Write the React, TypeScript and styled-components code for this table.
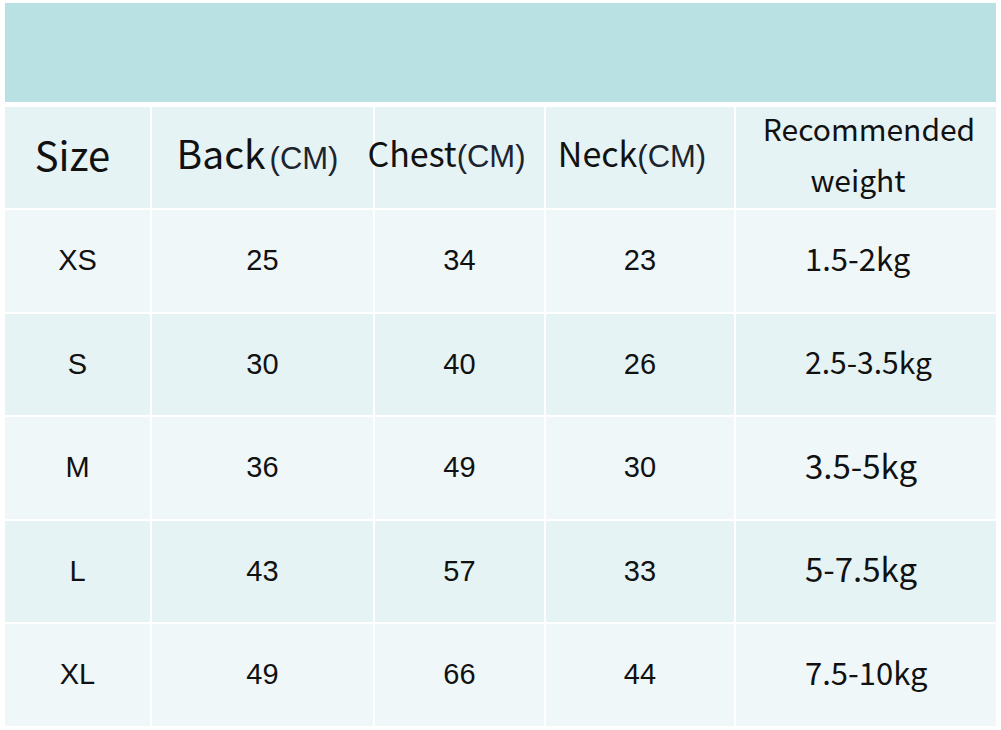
import React from "react";
import styled, { createGlobalStyle } from "styled-components";

const GlobalStyle = createGlobalStyle`
  html, body {
    margin: 0;
    padding: 0;
    background: #ffffff;
  }
`;

const Page = styled.div`
  width: 1001px;
  height: 730px;
  padding: 3px 0 0 5px;
  box-sizing: border-box;
  background: #ffffff;
`;

const Banner = styled.div`
  width: 991px;
  height: 99px;
  background: #b9e0e2;
  margin-bottom: 5px;
`;

const Table = styled.div`
  width: 991px;
  display: grid;
  grid-template-columns: 145px 221px 169px 188px 260px;
  grid-template-rows: 101px repeat(5, 101.5px);
  gap: 2px;
`;

const Cell = styled.div<{ $tone: "head" | "light" | "mid"; $align?: "left" }>`
  background: ${(p) => (p.$tone === "light" ? "#f0f7f9" : "#e6f3f4")};
  display: flex;
  align-items: center;
  justify-content: ${(p) => (p.$align === "left" ? "flex-start" : "center")};
  padding-left: ${(p) => (p.$align === "left" ? "69px" : "0")};
  box-sizing: border-box;
  color: #111;
`;

const HeadLabel = styled.span<{ $shift?: number; $size: number }>`
  font-family: "Noto Sans CJK SC", "Open Sans", sans-serif;
  font-size: ${(p) => p.$size}px;
  line-height: 1;
  white-space: nowrap;
  position: relative;
  top: -4px;
  left: ${(p) => p.$shift ?? 0}px;
`;

const Unit = styled.span<{ $gap?: number }>`
  font-family: "Liberation Sans", Arial, sans-serif;
  font-size: 31px;
  color: #1c2430;
  margin-left: ${(p) => p.$gap ?? 0}px;
`;

const Stacked = styled.span`
  font-family: "Noto Sans CJK SC", "Open Sans", sans-serif;
  font-size: 30px;
  line-height: 51px;
  text-align: center;
  position: relative;
  top: -4px;
  left: 3px;
`;

const SecondLine = styled.span`
  position: relative;
  left: -11px;
`;

const Value = styled.span`
  font-family: "Liberation Sans", Arial, sans-serif;
  font-size: 29px;
  color: #111;
`;

const Weight = styled.span<{ $size: number }>`
  font-family: "Noto Sans CJK SC", "Open Sans", sans-serif;
  font-size: ${(p) => p.$size}px;
  color: #111;
  position: relative;
  top: -3px;
`;

const rows = [
  { size: "XS", back: 25, chest: 34, neck: 23, weight: "1.5-2kg", w: 31 },
  { size: "S", back: 30, chest: 40, neck: 26, weight: "2.5-3.5kg", w: 30 },
  { size: "M", back: 36, chest: 49, neck: 30, weight: "3.5-5kg", w: 33 },
  { size: "L", back: 43, chest: 57, neck: 33, weight: "5-7.5kg", w: 33 },
  { size: "XL", back: 49, chest: 66, neck: 44, weight: "7.5-10kg", w: 31 },
];

export default function App() {
  return (
    <Page>
      <GlobalStyle />
      <Banner />
      <Table>
        <Cell $tone="head">
          <HeadLabel $size={40} $shift={-5}>
            Size
          </HeadLabel>
        </Cell>
        <Cell $tone="head">
          <HeadLabel $size={39} $shift={-5}>
            Back<Unit $gap={4}>(CM)</Unit>
          </HeadLabel>
        </Cell>
        <Cell $tone="head">
          <HeadLabel $size={34} $shift={-13}>
            Chest<Unit>(CM)</Unit>
          </HeadLabel>
        </Cell>
        <Cell $tone="head">
          <HeadLabel $size={34} $shift={-8}>
            Neck<Unit>(CM)</Unit>
          </HeadLabel>
        </Cell>
        <Cell $tone="head">
          <Stacked>
            Recommended
            <br />
            <SecondLine>weight</SecondLine>
          </Stacked>
        </Cell>
        {rows.map((r, i) => {
          const tone = i % 2 === 0 ? "light" : "mid";
          return (
            <React.Fragment key={r.size}>
              <Cell $tone={tone}>
                <Value>{r.size}</Value>
              </Cell>
              <Cell $tone={tone}>
                <Value>{r.back}</Value>
              </Cell>
              <Cell $tone={tone}>
                <Value>{r.chest}</Value>
              </Cell>
              <Cell $tone={tone}>
                <Value>{r.neck}</Value>
              </Cell>
              <Cell $tone={tone} $align="left">
                <Weight $size={r.w}>{r.weight}</Weight>
              </Cell>
            </React.Fragment>
          );
        })}
      </Table>
    </Page>
  );
}
